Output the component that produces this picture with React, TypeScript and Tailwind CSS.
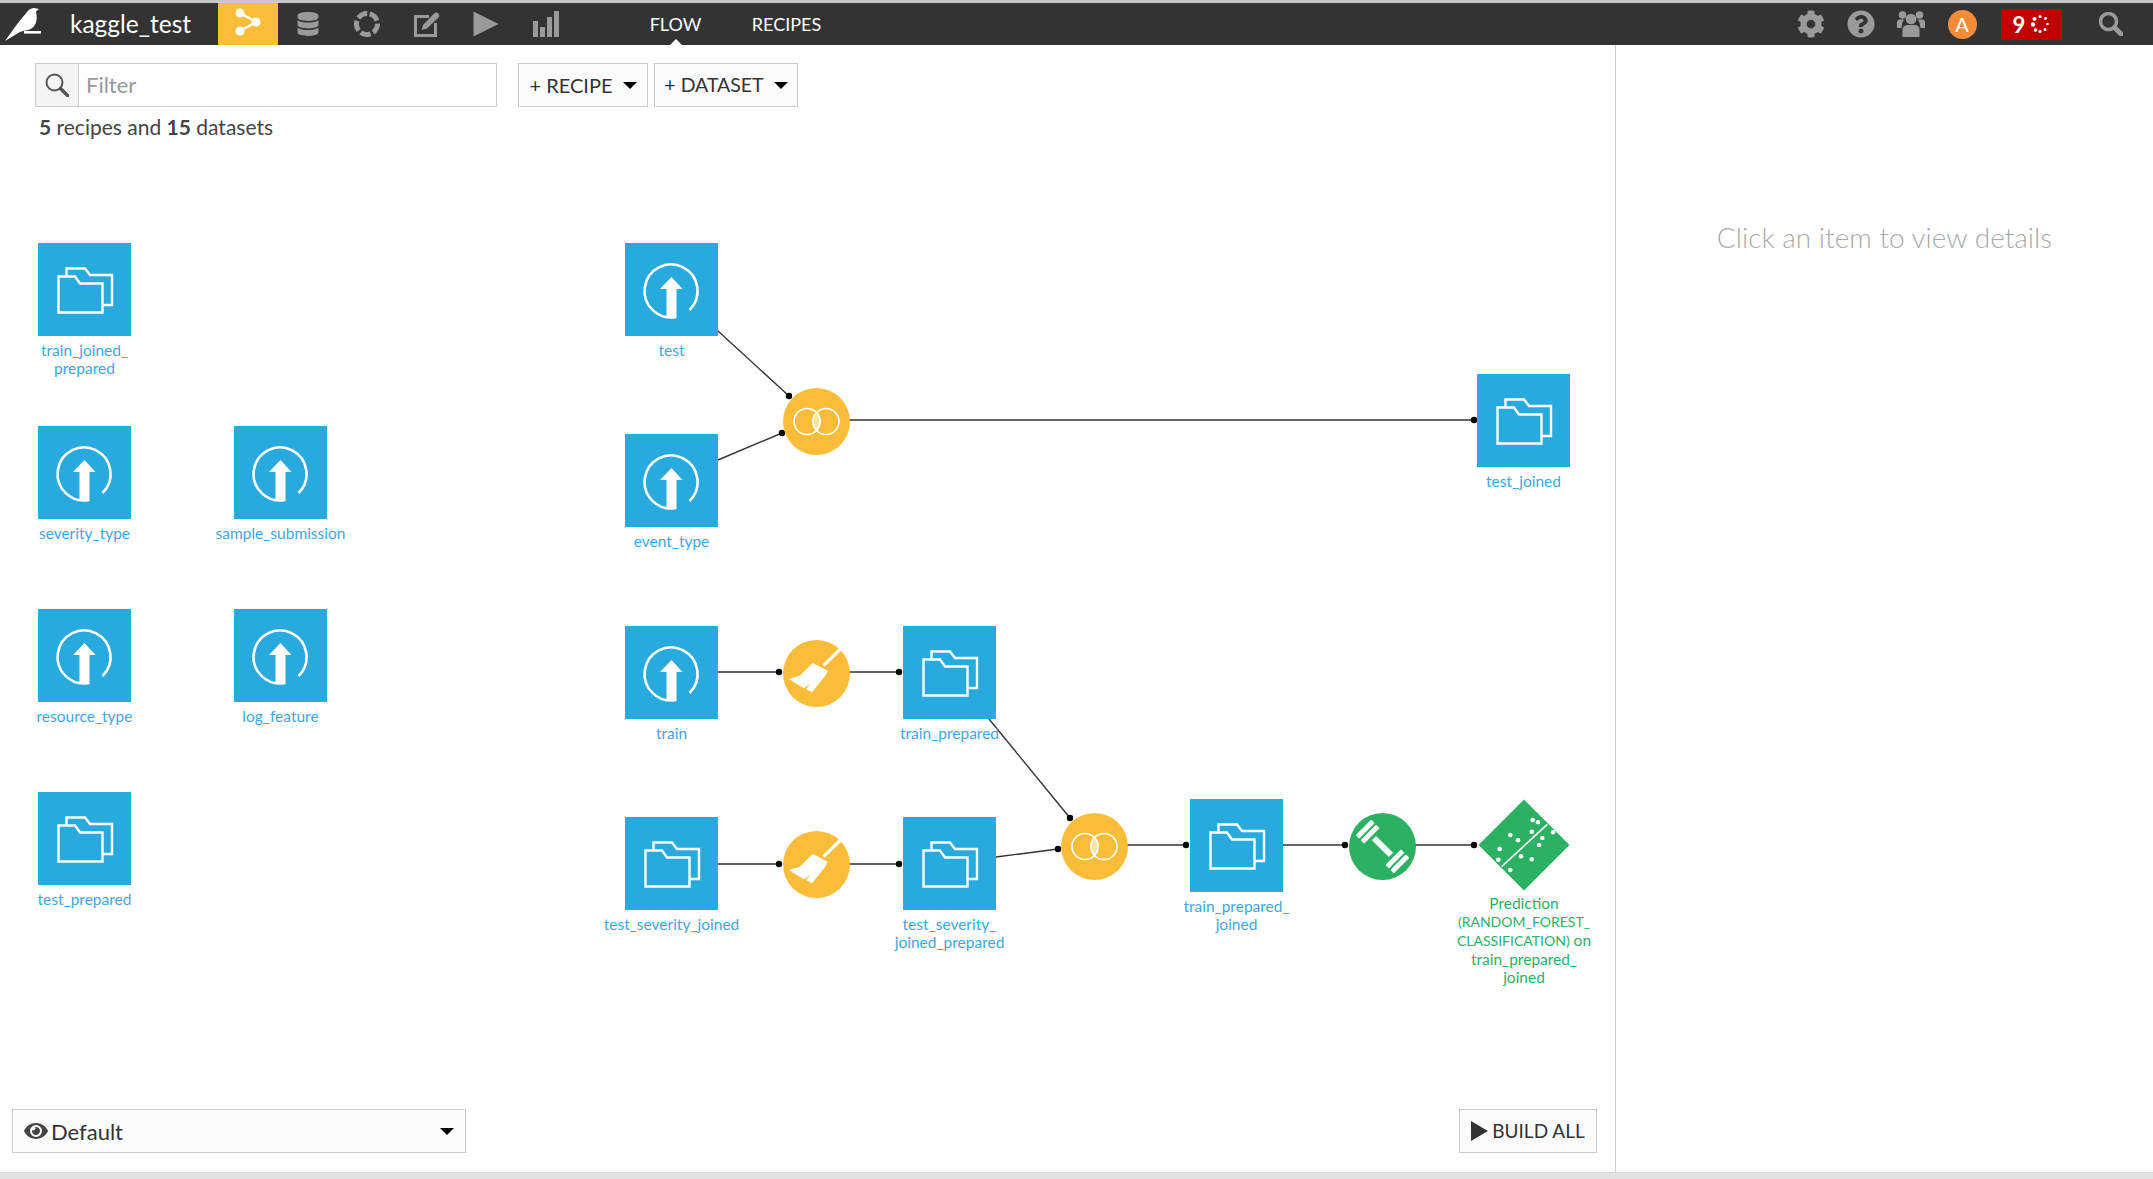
import { FaCog, FaDatabase, FaEye, FaQuestionCircle } from "react-icons/fa";

type Kind = "upload" | "folder";

// page coordinates, read off the screenshot
const datasets: { x: number; y: number; kind: Kind; label: string }[] = [
    { x: 38, y: 243, kind: "folder", label: "train_joined_\nprepared" },
    { x: 38, y: 426, kind: "upload", label: "severity_type" },
    { x: 234, y: 426, kind: "upload", label: "sample_submission" },
    { x: 38, y: 609, kind: "upload", label: "resource_type" },
    { x: 234, y: 609, kind: "upload", label: "log_feature" },
    { x: 38, y: 792, kind: "folder", label: "test_prepared" },
    { x: 625, y: 243, kind: "upload", label: "test" },
    { x: 625, y: 434, kind: "upload", label: "event_type" },
    { x: 625, y: 626, kind: "upload", label: "train" },
    { x: 625, y: 817, kind: "folder", label: "test_severity_joined" },
    { x: 903, y: 626, kind: "folder", label: "train_prepared" },
    { x: 903, y: 817, kind: "folder", label: "test_severity_\njoined_prepared" },
    { x: 1190, y: 799, kind: "folder", label: "train_prepared_\njoined" },
    { x: 1477, y: 374, kind: "folder", label: "test_joined" },
];

const recipes: { x: number; y: number; kind: "join" | "broom" | "train" }[] = [
    { x: 816, y: 421, kind: "join" },
    { x: 816, y: 673, kind: "broom" },
    { x: 816, y: 864, kind: "broom" },
    { x: 1094, y: 846, kind: "join" },
    { x: 1382, y: 846, kind: "train" },
];

// [x1, y1, x2, y2], a dot is drawn at the end of each one
const edges = [
    [718, 331, 789, 396],
    [718, 460, 782, 433],
    [849, 420, 1474, 420],
    [718, 672, 779, 672],
    [849, 672, 899, 672],
    [718, 864, 779, 864],
    [849, 864, 899, 864],
    [989, 719, 1070, 818],
    [996, 857, 1058, 849],
    [1127, 845, 1186, 845],
    [1283, 845, 1345, 845],
    [1415, 845, 1474, 845],
];

const CANVAS_TOP = 145;

const Logo = () => (
    <svg width="44" height="42" viewBox="0 3 44 42">
        <path d="M5 41 C12 31 20 20 27 12 C29 9 32 8 34 8 L39 9 L36 11.500 C38 20 36 28 28 30 C24 31 22 31 20 32 Z" fill="white" />
        <rect x="24" y="31" width="17" height="2.600" fill="white" />
    </svg>
);

const FlowIcon = () => (
    <svg width="32" height="30" viewBox="0 0 32 30" className="mb-[4px]">
        <path d="M8 6 L24 15 L8 24" fill="none" stroke="white" strokeWidth="2.500" />
        <circle cx="8" cy="6" r="4.500" fill="white" />
        <circle cx="24" cy="15" r="4.500" fill="white" />
        <circle cx="8" cy="24" r="4.500" fill="white" />
    </svg>
);

const RingIcon = () => (
    <svg width="28" height="28" viewBox="0 0 28 28">
        <circle cx="14" cy="14" r="10.500" fill="none" stroke="#9a9a9a" strokeWidth="5" strokeDasharray="10.200 3" transform="rotate(-75 14 14)" />
    </svg>
);

const EditIcon = () => (
    <svg width="26" height="26" viewBox="0 0 26 26">
        <path d="M15 5.500 H1.500 V24.500 H21.500 V12" fill="none" stroke="#9a9a9a" strokeWidth="3" />
        <path d="M7.500 19 L9 14 L20 2.500 Q22 0.500 24.500 2.500 Q26 4.500 24.500 6.500 L13 17.500 Z" fill="#9a9a9a" />
    </svg>
);

const PlayIcon = () => (
    <svg width="26" height="26" viewBox="0 0 26 26">
        <polygon points="0.500,0.500 25.500,13 0.500,25.500" fill="#9a9a9a" />
    </svg>
);

const BarsIcon = () => (
    <svg width="26" height="26" viewBox="0 0 26 26">
        <rect x="0" y="10" width="5" height="16" fill="#9a9a9a" />
        <rect x="7" y="16" width="5" height="10" fill="#9a9a9a" />
        <rect x="14" y="6" width="5" height="20" fill="#9a9a9a" />
        <rect x="21" y="0" width="5" height="26" fill="#9a9a9a" />
    </svg>
);

const UsersIcon = () => (
    <svg width="28" height="26" viewBox="0 0 28 26" fill="#9a9a9a">
        <circle cx="5.500" cy="4" r="3.800" />
        <circle cx="22.500" cy="4" r="3.800" />
        <path d="M0 17 V11 Q0 8.500 3 8.500 H7 Q4.500 12 4.500 17 Z" />
        <path d="M28 17 V11 Q28 8.500 25 8.500 H21 Q23.500 12 23.500 17 Z" />
        <circle cx="14" cy="8" r="5.300" />
        <path d="M5.500 26 V19 Q5.500 14.500 10 14 H18 Q22.500 14.500 22.500 19 V26 Z" />
    </svg>
);

const SearchIcon = ({ color, width }: { color: string; width: number }) => (
    <svg width="24" height="24" viewBox="0 0 24 24">
        <circle cx="9.500" cy="9.500" r="8" fill="none" stroke={color} strokeWidth={width} />
        <path d="M15.500 15.500 L22.500 22.500" stroke={color} strokeWidth={width + 1.500} strokeLinecap="round" />
    </svg>
);

const Spinner = () => (
    <svg width="20" height="20" viewBox="0 0 20 20" fill="white">
        <circle cx="10" cy="2.500" r="1.500" />
        <circle cx="15.500" cy="4.500" r="1.400" />
        <circle cx="17.500" cy="10" r="1.300" />
        <circle cx="15" cy="15.500" r="1.400" />
        <circle cx="10" cy="17.500" r="1.600" />
        <circle cx="5.500" cy="16" r="1.800" />
        <circle cx="3" cy="10.500" r="2.200" />
        <circle cx="4.500" cy="5" r="2" />
    </svg>
);

const UploadGlyph = () => (
    <svg width="93" height="93" viewBox="0 0 93 93">
        <path d="M51 74 A26.500 26.500 0 1 1 64.500 67" fill="none" stroke="white" strokeWidth="2.600" />
        <polygon points="46.500,34 57.500,46 51.500,46 51.500,75 41.500,75 41.500,46 35,46" fill="white" />
    </svg>
);

const FolderGlyph = () => (
    <svg width="93" height="93" viewBox="0 0 93 93">
        <path d="M28.500 33 V25.500 H47 L52 32 H74 V62 H65" fill="none" stroke="white" strokeWidth="2.400" />
        <path d="M20.500 69.500 V33.500 H37 L42 40.500 H64.500 V69.500 Z" fill="none" stroke="white" strokeWidth="2.400" />
    </svg>
);

const JoinGlyph = () => (
    <svg width="67" height="67" viewBox="0 0 67 67">
        <path d="M33.500 23.500 A13.300 13.300 0 0 1 33.500 43.500 A13.300 13.300 0 0 1 33.500 23.500" fill="#fde3a8" />
        <circle cx="24" cy="33.500" r="13" fill="none" stroke="white" strokeWidth="1.600" />
        <circle cx="43" cy="33.500" r="13" fill="none" stroke="white" strokeWidth="1.600" />
    </svg>
);

const BroomGlyph = () => (
    <svg width="67" height="67" viewBox="0 0 67 67">
        <path d="M57.500 9 L40.500 25.700" stroke="white" strokeWidth="3.200" />
        <polygon points="29.700,23 44.700,30.700 42.300,35.700 29,52.300 23,49 27.300,44 20.700,48.300 5.700,39 16.700,35.700" fill="white" />
    </svg>
);

const TrainGlyph = () => (
    <svg width="67" height="67" viewBox="0 0 67 67">
        <g transform="translate(33.500 33.500) rotate(45)" fill="white">
            <rect x="-12" y="-3" width="24" height="6" />
            <rect x="-27" y="-11" width="5" height="22" rx="1" />
            <rect x="-20" y="-11" width="5" height="22" rx="1" />
            <rect x="15" y="-11" width="5" height="22" rx="1" />
            <rect x="22" y="-11" width="5" height="22" rx="1" />
        </g>
    </svg>
);

const dots = [
    [54.7, 21], [60, 23.3], [32.3, 36], [53.7, 32.7], [40, 41.3], [75, 33.3], [64.3, 39],
    [61, 46], [21.7, 50], [20.3, 60.7], [43, 57.3], [53.7, 60.3], [32.3, 71],
];

const ModelGlyph = () => (
    <svg width="92" height="92" viewBox="0 0 92 92">
        <polygon points="46,0.500 91.500,46 46,91.500 0.500,46" fill="#2bb161" />
        <path d="M69.300 25.300 L23.700 67.700" stroke="white" strokeWidth="1.600" />
        {dots.map(([cx, cy]) => (
            <circle key={`${cx}-${cy}`} cx={cx} cy={cy} r="2.300" fill="white" />
        ))}
    </svg>
);

const Caret = () => (
    <span className="inline-block w-0 h-0 border-x-[7px] border-t-[7px] border-x-transparent border-t-black" />
);

const DatasetNode = ({ x, y, kind, label }: { x: number; y: number; kind: Kind; label: string }) => (
    <div className="absolute w-[93px] flex flex-col items-center" style={{ left: x, top: y - CANVAS_TOP }}>
        <div className="w-[93px] h-[93px] bg-[#29aadf] shrink-0">
            {kind === "upload" ? <UploadGlyph /> : <FolderGlyph />}
        </div>
        <div className="mt-[5px] text-[15.500px] leading-[18px] text-[#42a7e0] text-center whitespace-pre">{label}</div>
    </div>
);

const RecipeNode = ({ x, y, kind }: { x: number; y: number; kind: "join" | "broom" | "train" }) => (
    <div
        className={kind === "train" ? "absolute w-[67px] h-[67px] rounded-full bg-[#2bb161]" : "absolute w-[67px] h-[67px] rounded-full bg-[#fabd39]"}
        style={{ left: x - 33.5, top: y - 33.5 - CANVAS_TOP }}
    >
        {kind === "join" && <JoinGlyph />}
        {kind === "broom" && <BroomGlyph />}
        {kind === "train" && <TrainGlyph />}
    </div>
);

export default function App() {
    return (
        <div className="h-[1179px] w-[2153px] flex flex-col overflow-hidden bg-white text-[#333] font-['Lato',sans-serif]">
            <div className="h-[3px] bg-[#c8c8c8]" />
            <header className="h-[42px] bg-[#333] flex items-center">
                <div className="w-[66px] flex items-center">
                    <Logo />
                </div>
                <div className="w-[152px] pl-[4px] text-[24.500px] text-white">kaggle_test</div>
                <div className="w-[60px] h-full bg-[#fabd39] flex items-center justify-center">
                    <FlowIcon />
                </div>
                <div className="w-[59.500px] flex justify-center"><FaDatabase size={24} color="#9a9a9a" /></div>
                <div className="w-[59.500px] flex justify-center"><RingIcon /></div>
                <div className="w-[59.500px] flex justify-center"><EditIcon /></div>
                <div className="w-[59.500px] flex justify-center"><PlayIcon /></div>
                <div className="w-[59.500px] flex justify-center"><BarsIcon /></div>
                <nav className="ml-[44px] h-full flex items-center text-white text-[18px]">
                    <div className="relative h-full w-[112px] flex items-center justify-center">
                        FLOW
                        <span className="absolute bottom-0 left-1/2 -ml-[6px] w-0 h-0 border-x-[6px] border-b-[6px] border-x-transparent border-b-white" />
                    </div>
                    <div className="w-[110px] text-center">RECIPES</div>
                </nav>
                <div className="ml-auto pr-[17px] flex items-center">
                    <div className="w-[50px] flex justify-center"><FaCog size={28} color="#9a9a9a" /></div>
                    <div className="w-[50px] flex justify-center"><FaQuestionCircle size={28} color="#9a9a9a" /></div>
                    <div className="w-[50px] flex justify-center"><UsersIcon /></div>
                    <div className="w-[52px] flex justify-center">
                        <div className="w-[29px] h-[29px] rounded-full bg-[#f28c38] text-white text-[20px] flex items-center justify-center">A</div>
                    </div>
                    <div className="ml-[13px] w-[61px] h-[31px] bg-[#c00000] text-white text-[22px] font-bold flex items-center justify-center gap-[5px]">
                        9 <Spinner />
                    </div>
                    <div className="w-[50px] ml-[24px] flex justify-center"><SearchIcon color="#9a9a9a" width={3.5} /></div>
                </div>
            </header>
            <div className="flex-1 flex min-h-0">
                <main className="w-[1615px] flex flex-col">
                    <div className="h-[100px] pl-[35px] pt-[18px] shrink-0">
                        <div className="flex items-start">
                            <div className="w-[462px] h-[44px] border border-[#ccc] flex">
                                <div className="w-[43px] bg-[#f5f5f5] border-r border-[#ccc] flex items-center justify-center">
                                    <SearchIcon color="#555" width={2} />
                                </div>
                                <input placeholder="Filter" className="flex-1 min-w-0 px-[7px] pb-[2px] text-[22px] outline-none placeholder:text-[#999]" />
                            </div>
                            <button className="ml-[21px] w-[130px] h-[44px] border border-[#ccc] bg-[#fcfcfc] text-[20px] flex items-center justify-center gap-[10px]">
                                + RECIPE <Caret />
                            </button>
                            <button className="ml-[6px] w-[144px] h-[44px] border border-[#ccc] bg-[#fcfcfc] text-[19.500px] flex items-center justify-center gap-[10px]">
                                + DATASET <Caret />
                            </button>
                        </div>
                        <div className="mt-[6px] pl-[4px] text-[21px] leading-[28px] text-[#444]">
                            <b>5</b> recipes and <b>15</b> datasets
                        </div>
                    </div>
                    <div className="relative flex-1">
                        <svg className="absolute left-0 top-0" width="1615" height="880" viewBox={`0 ${CANVAS_TOP} 1615 880`}>
                            {edges.map(([x1, y1, x2, y2]) => (
                                <g key={`${x1}-${y1}`}>
                                    <line x1={x1} y1={y1} x2={x2} y2={y2} stroke="#333" strokeWidth="1.400" />
                                    <circle cx={x2} cy={y2} r="3.200" fill="black" />
                                </g>
                            ))}
                        </svg>
                        {datasets.map((d) => (
                            <DatasetNode key={d.label} {...d} />
                        ))}
                        {recipes.map((r) => (
                            <RecipeNode key={`${r.x}-${r.y}`} {...r} />
                        ))}
                        <div className="absolute w-[92px] flex flex-col items-center left-[1478px] top-[654px]">
                            <ModelGlyph />
                            <div className="mt-[3px] text-[15.500px] leading-[18px] text-[#2eb06a] text-center whitespace-pre">
                                Prediction{"\n"}
                                <span className="text-[14px]">(RANDOM_FOREST_{"\n"}CLASSIFICATION)</span> on{"\n"}
                                train_prepared_{"\n"}
                                joined
                            </div>
                        </div>
                    </div>
                    <div className="h-[63px] shrink-0 pl-[12px] pr-[18px] flex justify-between items-start">
                        <div className="w-[454px] h-[44px] border border-[#ccc] bg-[#fcfcfc] pl-[11px] pr-[11px] flex items-center gap-[3px] text-[22px]">
                            <FaEye size={24} color="#444" />
                            <span className="flex-1">Default</span>
                            <Caret />
                        </div>
                        <button className="w-[138px] h-[44px] border border-[#ccc] bg-[#fcfcfc] text-[19px] flex items-center justify-center gap-[4px]">
                            <svg width="17" height="20" viewBox="0 0 17 20"><polygon points="0,0 17,10 0,20" fill="#333" /></svg>
                            BUILD ALL
                        </button>
                    </div>
                </main>
                <aside className="flex-1 border-l border-[#ccc] pt-[171px] text-center text-[28px] font-light leading-[42px] text-[#aaa]">
                    Click an item to view details
                </aside>
            </div>
            <div className="h-[7px] bg-[#e2e2e2] border-t border-[#d8d8d8]" />
        </div>
    );
}
